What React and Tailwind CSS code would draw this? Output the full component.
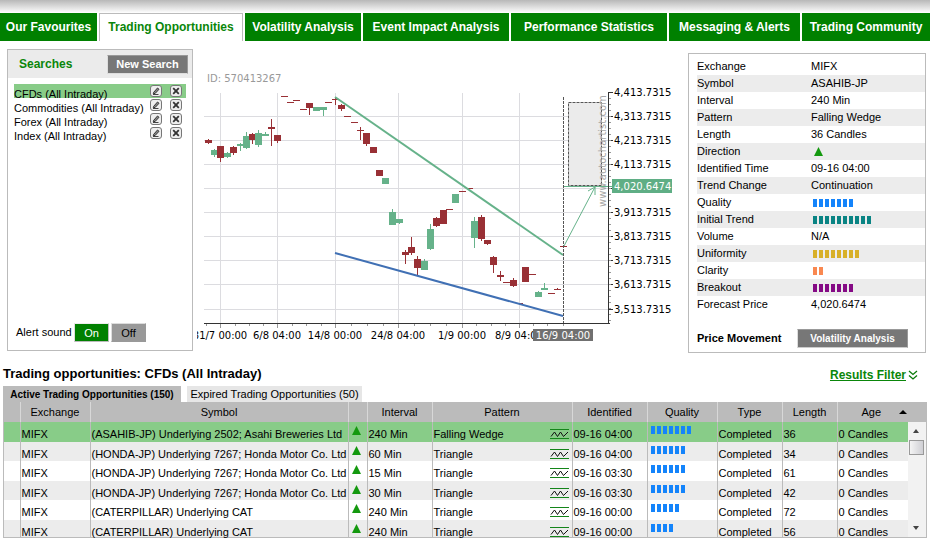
import React from "react";
import clsx from "clsx";

const TABS = [
  "Our Favourites",
  "Trading Opportunities",
  "Volatility Analysis",
  "Event Impact Analysis",
  "Performance Statistics",
  "Messaging & Alerts",
  "Trading Community",
];

const SEARCHES = [
  "CFDs (All Intraday)",
  "Commodities (All Intraday)",
  "Forex (All Intraday)",
  "Index (All Intraday)",
];

const DETAILS = [
  { label: "Exchange", value: "MIFX" },
  { label: "Symbol", value: "ASAHIB-JP" },
  { label: "Interval", value: "240 Min" },
  { label: "Pattern", value: "Falling Wedge" },
  { label: "Length", value: "36 Candles" },
  { label: "Direction", up: true },
  { label: "Identified Time", value: "09-16 04:00" },
  { label: "Trend Change", value: "Continuation" },
  { label: "Quality", bars: 7, color: "bg-[#1484fb]" },
  { label: "Initial Trend", bars: 10, color: "bg-[#0a8484]" },
  { label: "Volume", value: "N/A" },
  { label: "Uniformity", bars: 8, color: "bg-[#d8b028]" },
  { label: "Clarity", bars: 2, color: "bg-[#f98850]" },
  { label: "Breakout", bars: 7, color: "bg-[#850a85]" },
  { label: "Forecast Price", value: "4,020.6474" },
];

const ROWS = [
  { symbol: "(ASAHIB-JP) Underlying 2502; Asahi Breweries Ltd", interval: "240 Min", pattern: "Falling Wedge", time: "09-16 04:00", quality: 7, length: 36 },
  { symbol: "(HONDA-JP) Underlying 7267; Honda Motor Co. Ltd", interval: "60 Min", pattern: "Triangle", time: "09-16 04:00", quality: 6, length: 34 },
  { symbol: "(HONDA-JP) Underlying 7267; Honda Motor Co. Ltd", interval: "15 Min", pattern: "Triangle", time: "09-16 03:30", quality: 6, length: 61 },
  { symbol: "(HONDA-JP) Underlying 7267; Honda Motor Co. Ltd", interval: "30 Min", pattern: "Triangle", time: "09-16 03:30", quality: 6, length: 42 },
  { symbol: "(CATERPILLAR) Underlying CAT", interval: "240 Min", pattern: "Triangle", time: "09-16 00:00", quality: 5, length: 72 },
  { symbol: "(CATERPILLAR) Underlying CAT", interval: "240 Min", pattern: "Triangle", time: "09-16 00:00", quality: 4, length: 56 },
];

// [x, open/close top, open/close bottom, high, low, rising]
const CANDLES = [
  [205, 140, 143, 139, 144, 0],
  [211, 150, 155, 149, 157, 1],
  [217, 146, 158, 146, 162, 0],
  [224, 153, 157, 152, 158, 1],
  [230, 147, 153, 146, 155, 0],
  [237, 144, 146, 143, 151, 1],
  [243, 136, 148, 132, 149, 1],
  [249, 134, 140, 133, 144, 0],
  [255, 133, 145, 130, 147, 1],
  [262, 134, 136, 132, 136, 1],
  [268, 127, 129, 119, 146, 0],
  [274, 135, 141, 135, 143, 0],
  [281, 96, 97, 96, 97, 0],
  [287, 102, 103, 102, 103, 0],
  [293, 100, 101, 100, 101, 0],
  [300, 109, 110, 109, 110, 0],
  [306, 103, 108, 103, 115, 0],
  [313, 107, 111, 107, 111, 1],
  [320, 107, 110, 107, 116, 1],
  [325, 102, 103, 102, 103, 0],
  [332, 99, 100, 97, 105, 0],
  [338, 105, 109, 104, 111, 0],
  [344, 116, 117, 116, 117, 0],
  [351, 122, 123, 122, 123, 0],
  [357, 130, 131, 127, 140, 0],
  [363, 133, 144, 133, 146, 0],
  [370, 147, 153, 147, 153, 0],
  [376, 170, 176, 170, 176, 0],
  [382, 178, 184, 178, 184, 1],
  [389, 212, 225, 209, 225, 1],
  [396, 219, 223, 219, 224, 1],
  [402, 252, 255, 250, 264, 0],
  [408, 247, 253, 237, 255, 0],
  [414, 259, 268, 256, 276, 0],
  [421, 261, 270, 259, 270, 1],
  [427, 229, 249, 224, 250, 1],
  [433, 218, 226, 217, 227, 0],
  [440, 210, 224, 210, 224, 0],
  [446, 209, 210, 209, 210, 0],
  [452, 194, 203, 194, 203, 1],
  [459, 191, 192, 191, 192, 0],
  [466, 188, 189, 188, 189, 0],
  [471, 221, 238, 217, 248, 1],
  [478, 217, 239, 215, 241, 0],
  [484, 240, 244, 240, 245, 0],
  [490, 257, 265, 256, 273, 0],
  [497, 275, 277, 271, 281, 0],
  [503, 282, 283, 282, 283, 0],
  [510, 280, 286, 278, 287, 0],
  [516, 303, 304, 303, 304, 0],
  [522, 267, 282, 267, 282, 0],
  [529, 274, 275, 274, 275, 0],
  [535, 292, 297, 291, 297, 1],
  [541, 288, 290, 283, 290, 1],
  [548, 293, 294, 293, 294, 0],
  [554, 289, 290, 288, 290, 0],
  [560, 246, 247, 246, 247, 0],
];

const PRICES = [
  [92, "4,413.7315"],
  [116, "4,313.7315"],
  [140, "4,213.7315"],
  [164, "4,113.7315"],
  [188, null],
  [212, "3,913.7315"],
  [236, "3,813.7315"],
  [260, "3,713.7315"],
  [284, "3,613.7315"],
  [309, "3,513.7315"],
];

const DATES = [
  [220, "31/7 00:00"],
  [277, "6/8 04:00"],
  [335, "14/8 00:00"],
  [398, "24/8 04:00"],
  [462, "1/9 00:00"],
  [519, "8/9 04:00"],
];

const MINOR_X = [206, 235, 249, 263, 292, 306, 321, 351, 367, 383, 414, 430, 446, 476, 491, 505, 533, 547, 563];

const Bars = ({ count, color }) => (
  <span className="flex gap-0.5" role="img" aria-label={`${count} of 10`}>
    {Array.from({ length: count }, (_, i) => (
      <span key={i} className={clsx("h-2 w-1", color)} />
    ))}
  </span>
);

const UpArrow = () => (
  <svg width="9" height="9" viewBox="0 0 9 9" className="block">
    <path d="M4.5 0 9 9H0z" fill="#14990f" />
  </svg>
);

const WaveIcon = () => (
  <svg width="19" height="10" viewBox="0 0 19 10" className="block shrink-0">
    <path d="M0 .5h19M0 9.5h19" stroke="#14851a" />
    <path d="M1 7.5 4.500 3 7.500 7.500 10.500 3 13.500 7.500 18 3" fill="none" stroke="#111" />
  </svg>
);

const EditIcon = () => (
  <svg width="12" height="12" viewBox="0 0 12 12" className="block">
    <rect x=".5" y=".5" width="11" height="11" rx="2.500" fill="#eee" stroke="#777" />
    <path d="M3.500 7.500 7.500 3 9 4.300 5.300 8.300 3.300 8.800z" fill="#888" stroke="#333" strokeWidth="1" />
    <path d="M3 9.500h5.500" stroke="#444" />
  </svg>
);

const DeleteIcon = () => (
  <svg width="12" height="12" viewBox="0 0 12 12" className="block">
    <rect x=".5" y=".5" width="11" height="11" rx="2.500" fill="#eee" stroke="#777" />
    <path d="M3.200 3.200l5.600 5.600M8.800 3.200l-5.600 5.600" stroke="#333" strokeWidth="1.800" />
  </svg>
);

const Nav = () => (
  <nav className="grid grid-cols-[97fr_144fr_116fr_146fr_156fr_131fr_128fr] gap-0.5">
    {TABS.map((tab, i) => (
      <a
        key={tab}
        href="#"
        className={clsx(
          "flex h-7 items-center justify-center whitespace-nowrap text-[12px] font-bold",
          i === 1 ? "border-x border-t border-[#bbb] bg-white text-[#0a860a]" : "bg-[#008000] text-white"
        )}
      >
        {tab}
      </a>
    ))}
  </nav>
);

const SearchPanel = () => (
  <section className="flex h-[302px] w-[186px] shrink-0 flex-col border border-[#bbb]">
    <header className="flex h-7 items-center justify-between bg-[#ebebeb] pl-[11px] pr-1">
      <h2 className="text-[12px] font-bold text-[#0a860a]">Searches</h2>
      <button className="h-[19px] w-[81px] border border-b-[#ddd] border-l-[#ddd] border-r-[#999] border-t-[#999] bg-[#777] text-[11px] font-bold leading-[16px] text-white">
        New Search
      </button>
    </header>
    <ul className="px-1.5 pt-1.5">
      {SEARCHES.map((name, i) => (
        <li key={name} className={clsx("flex h-3.5 items-center pr-1", i === 0 && "bg-[#88cc88]")}>
          <a href="#" className="grow whitespace-nowrap pt-1.5">{name}</a>
          <span className="flex gap-2">
            <button aria-label={`Edit ${name}`}><EditIcon /></button>
            <button aria-label={`Delete ${name}`}><DeleteIcon /></button>
          </span>
        </li>
      ))}
    </ul>
    <div className="mt-auto flex items-center gap-0.5 pb-2 pl-2">
      <span className="w-14">Alert sound</span>
      <button className="h-[19px] w-[35px] border border-b-[#bbb] border-l-[#ddd] border-r-[#bbb] border-t-[#eee] bg-[#008000] leading-[16px] text-white">
        On
      </button>
      <button className="h-[19px] w-[35px] border border-b-[#999] border-l-[#ddd] border-r-[#999] border-t-[#ddd] bg-[#999] leading-[16px]">
        Off
      </button>
    </div>
  </section>
);

const Chart = () => (
  <svg viewBox="197 66 487 284" className="h-[284px] min-w-0 grow font-['DejaVu_Sans',sans-serif] text-[10px]">
    <text x="207" y="82" fill="#999">ID: 570413267</text>

    <g fill="#dcdce0">
      {PRICES.slice(1).map(([y]) => (
        <rect key={y} x="204" y={y} width="405" height="1" />
      ))}
      {DATES.map(([x]) => (
        <rect key={x} x={x} y="93" width="1" height="230" />
      ))}
    </g>

    {/* forecast zone */}
    <rect x="568.5" y="102.5" width="33" height="83" fill="#ebebeb" stroke="#555" strokeDasharray="3 1" />
    <text transform="translate(606 207) rotate(-90)" fill="#a5a5a5">www.autochartist.com</text>

    {CANDLES.map(([x, top, bottom, high, low, rising]) => (
      <g key={x} fill={rising ? "#66b28a" : "#993035"}>
        <rect x={x} y={top} width="7" height={bottom - top} />
        <rect x={x + 3} y={high} width="1" height={low - high} />
      </g>
    ))}

    <path d="M335 97 563 255" stroke="#66b28a" strokeWidth="2" />
    <path d="M335 253 563 316" stroke="#4070b4" strokeWidth="2" />
    <path d="M563.5 97v226" stroke="#555" strokeDasharray="3 1" />
    <path d="M564 186.500h48M564 246 595 187M588 191 595 187 595 195" fill="none" stroke="#66b28a" />

    <g fill="#333">
      <rect x="204" y="323" width="406" height="1" />
      <rect x="608" y="92" width="1" height="232" />
      {PRICES.map(([y]) => (
        <rect key={y} x="609" y={y} width="4" height="1" />
      ))}
    </g>
    <g fill="#999">
      {Array.from({ length: 38 }, (_, i) => (
        <rect key={i} x="609" y={98 + i * 6} width="2" height="1" />
      ))}
      {MINOR_X.map((x) => (
        <rect key={x} x={x} y="324" width="1" height="2" />
      ))}
      {DATES.map(([x]) => (
        <rect key={x} x={x} y="324" width="1" height="4" />
      ))}
    </g>

    {PRICES.map(([y, label]) => label && (
      <text key={y} x="614" y={y + 4}>{label}</text>
    ))}
    {DATES.map(([x, label]) => (
      <text key={x} x={x} y="339" textAnchor="middle">{label}</text>
    ))}

    <rect x="612" y="179" width="60" height="14" fill="#5fae85" />
    <text x="614" y="190" fill="#fff">4,020.6474</text>
    <rect x="533" y="329" width="60" height="12" fill="#707070" />
    <text x="563" y="339" fill="#fff" textAnchor="middle">16/9 04:00</text>
  </svg>
);

const DetailsPanel = () => (
  <section className="mt-1 h-[300px] w-[238px] shrink-0 border border-[#bbb] pl-2 pt-1">
    <table className="w-full table-fixed">
      <tbody>
        {DETAILS.map(({ label, value, up, bars, color }) => (
          <tr key={label} className="h-[17px] even:bg-[#ececec]">
            <th scope="row" className="w-[114px] p-0 text-left font-normal">{label}</th>
            <td className="p-0">
              {value}
              {up && <span className="flex pl-[3px]"><UpArrow /></span>}
              {bars && <span className="flex pl-0.5"><Bars count={bars} color={color} /></span>}
            </td>
          </tr>
        ))}
      </tbody>
    </table>
    <div className="mt-4 flex items-center">
      <span className="w-[100px] font-bold">Price Movement</span>
      <button className="h-[19px] w-[111px] border border-b-[#ccc] border-l-[#ddd] border-r-[#999] border-t-[#999] bg-[#777] text-[10px] font-bold leading-[16px] text-white">
        Volatility Analysis
      </button>
    </div>
  </section>
);

const Scrollbar = () => (
  <div className="flex h-[115px] w-4 flex-col items-center justify-between bg-[#f2f2f2]">
    <button aria-label="Scroll up" className="flex h-[18px] w-full items-center justify-center">
      <svg width="6" height="4" viewBox="0 0 6 4"><path d="M3 0 6 4H0z" fill="#444" /></svg>
    </button>
    <div className="mb-auto h-[15px] w-[15px] border border-[#999] bg-linear-to-r from-[#f4f4f4] to-[#cfcfd4]" />
    <button aria-label="Scroll down" className="flex h-[18px] w-full items-center justify-center">
      <svg width="6" height="4" viewBox="0 0 6 4"><path d="M3 4 6 0H0z" fill="#444" /></svg>
    </button>
  </div>
);

const HEAD = "border-l border-[#d8d8d8] p-0 font-normal first:border-l-0";
const CELL = "border-l border-[#bbb] p-0 pl-px pt-[7px] align-top leading-[10px]";

const ResultsTable = () => (
  <div className="border border-t-0 border-[#bbb]">
    <table className="w-full table-fixed whitespace-nowrap">
      <colgroup>
        <col className="w-4" />
        <col className="w-[70px]" />
        <col />
        <col className="w-[19px]" />
        <col className="w-[65px]" />
        <col className="w-[140px]" />
        <col className="w-[75px]" />
        <col className="w-[70px]" />
        <col className="w-[65px]" />
        <col className="w-[55px]" />
        <col className="w-[71px]" />
        <col className="w-[18px]" />
      </colgroup>
      <thead>
        <tr className="h-5 bg-[#bbb]">
          <th className={HEAD} />
          <th className={HEAD}>Exchange</th>
          <th className={HEAD}>Symbol</th>
          <th className={HEAD} />
          <th className={HEAD}>Interval</th>
          <th className={HEAD}>Pattern</th>
          <th className={HEAD}>Identified</th>
          <th className={HEAD}>Quality</th>
          <th className={HEAD}>Type</th>
          <th className={HEAD}>Length</th>
          <th className={HEAD} aria-sort="ascending">
            <span className="flex items-center justify-between pl-6 pr-px">
              Age
              <svg width="8" height="4" viewBox="0 0 8 4"><path d="M4 0 8 4H0z" /></svg>
            </span>
          </th>
          <th className="p-0" />
        </tr>
      </thead>
      <tbody>
        {ROWS.map((row, i) => (
          <tr
            key={i}
            className={clsx(
              i === ROWS.length - 1 ? "h-[17px]" : "h-5 even:h-[19px]",
              i === 0 ? "bg-[#88cc88]" : "even:bg-[#ececec]"
            )}
          >
            <td className="p-0" />
            <td className={CELL}>MIFX</td>
            <td className={CELL}>{row.symbol}</td>
            <td className="border-l border-[#bbb] p-0 pl-[3px] pt-1 align-top"><UpArrow /></td>
            <td className={CELL}>{row.interval}</td>
            <td className={CELL}>
              <span className="flex justify-between pr-[3px]">{row.pattern}<WaveIcon /></span>
            </td>
            <td className={CELL}>{row.time}</td>
            <td className="border-l border-[#bbb] p-0 pl-[3px] pt-1 align-top">
              <Bars count={row.quality} color="bg-[#1484fb]" />
            </td>
            <td className={CELL}>Completed</td>
            <td className={CELL}>{row.length}</td>
            <td className={CELL}>0 Candles</td>
            {i === 0 && (
              <td rowSpan={ROWS.length} className="bg-[#f2f2f2] p-0 align-top"><Scrollbar /></td>
            )}
          </tr>
        ))}
      </tbody>
    </table>
  </div>
);

const App = () => (
  <div className="bg-white font-['Liberation_Sans',Arial,sans-serif] text-[11px] leading-[13px] text-black">
    <div className="h-[13px] bg-linear-to-b from-[#b8b8b8] to-white" />
    <Nav />
    <main>
      <div className="flex pl-[7px] pr-1 pt-2">
        <SearchPanel />
        <div className="flex min-w-0 grow pl-1 pr-1 pt-[17px]"><Chart /></div>
        <DetailsPanel />
      </div>
      <div className="flex items-center justify-between pl-[3px] pr-3 pt-3">
        <h1 className="text-[13px] font-bold leading-[18px]">Trading opportunities: CFDs (All Intraday)</h1>
        <a href="#" className="flex items-center gap-0.5 pt-0.5 text-[12px] font-bold leading-4 text-[#0a860a]">
          <span className="underline">Results Filter</span>
          <svg width="10" height="10" viewBox="0 0 10 10" fill="none" stroke="#0a7a0a" strokeWidth="1.3">
            <path d="M1 1l4 3.500L9 1M1 5.500 5 9l4-3.500" />
          </svg>
        </a>
      </div>
      <div className="px-[3px] pt-[3px]">
        <div className="flex gap-1.5">
          <button className="h-4 w-[178px] whitespace-nowrap bg-[#bbb] text-[10px] font-bold">Active Trading Opportunities (150)</button>
          <button className="h-4 w-[175px] whitespace-nowrap bg-[#e6e6e6]">Expired Trading Opportunities (50)</button>
        </div>
        <ResultsTable />
      </div>
    </main>
  </div>
);

export default App;
